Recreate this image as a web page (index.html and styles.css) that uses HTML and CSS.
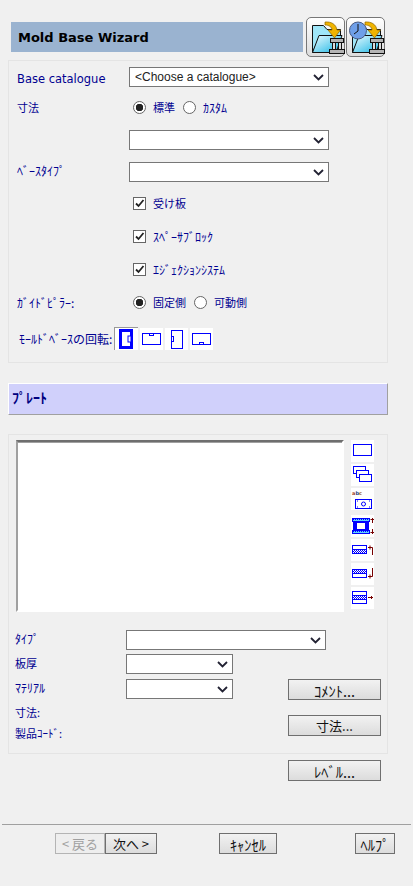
FILE: index.html
```html
<!DOCTYPE html>
<html lang="ja">
<head>
  <meta charset="UTF-8">
  <title>Mold Base Wizard</title>
  <meta name="viewport" content="width=device-width, initial-scale=1.0">
  <link rel="stylesheet" href="styles.css">
</head>
<body>
  <svg class="svg-defs" width="0" height="0">
    <defs>
      <pattern id="hatch" width="2" height="2" patternUnits="userSpaceOnUse">
        <rect width="2" height="2" fill="#fff"/>
        <rect width="1" height="1" fill="#00f"/>
        <rect x="1" y="1" width="1" height="1" fill="#00f"/>
      </pattern>
      <pattern id="hatch-cyan" width="2" height="2" patternUnits="userSpaceOnUse">
        <rect width="2" height="2" fill="#5fd0ff"/>
        <rect width="1" height="1" fill="#00f"/>
      </pattern>
      <linearGradient id="folder-grad" x1="0" y1="0" x2="1" y2="1">
        <stop offset="0" stop-color="#eefcff"/>
        <stop offset="1" stop-color="#14b4e4"/>
      </linearGradient>
      <g id="pillar">
        <rect x="23.500" y="20.500" width="13" height="4" fill="#b4b4b4" stroke="#111"/>
        <rect x="25.500" y="24.500" width="3" height="7" fill="#ddd" stroke="#111"/>
        <rect x="31.500" y="24.500" width="3" height="7" fill="#ddd" stroke="#111"/>
        <rect x="22.500" y="31.500" width="15" height="4" fill="#b4b4b4" stroke="#111"/>
      </g>
      <g id="folder">
        <path d="M5.500 34.500V7.500H16.500L20 11.500H33.500V20H12Z" fill="#9fe6f8" stroke="#111"/>
        <path d="M5.500 34.500L12 17.500H35L29 34.500Z" fill="url(#folder-grad)" stroke="#111"/>
      </g>
      <path id="arrow" d="M18 4C24 3.500 29 6 30 12H33.500L27.500 20L21 12H25C25 9 22 7 18 7Z" fill="#f0b400" stroke="#8a6500" stroke-width=".7"/>
    </defs>
  </svg>

  <header class="wizard-head">
    <div class="wizard-title">Mold Base Wizard</div>
    <button class="icon-btn">
      <svg width="38" height="38" viewBox="0 0 38 38"><use href="#folder"/><use href="#arrow"/><use href="#pillar"/></svg>
    </button>
    <button class="icon-btn">
      <svg width="38" height="38" viewBox="0 0 38 38">
        <use href="#folder"/>
        <circle cx="11" cy="12.500" r="8.500" fill="#6f9fe8" stroke="#4a5a80"/>
        <path d="M11 6V13L7 16" fill="none" stroke="#111"/>
        <use href="#arrow"/><use href="#pillar"/>
      </svg>
    </button>
  </header>

  <section class="group group-base">
    <div class="row">
      <label class="lbl lbl-latin">Base catalogue</label>
      <select class="dd dd-wide"><option>&lt;Choose a catalogue&gt;</option></select>
    </div>
    <div class="row gap-10">
      <label class="lbl zen">寸法</label>
      <span class="radio-set">
        <input type="radio" name="size" checked><span class="opt zen">標準</span>
        <input type="radio" name="size"><span class="opt">ｶｽﾀﾑ</span>
      </span>
    </div>
    <div class="row">
      <label class="lbl"></label>
      <select class="dd dd-wide"></select>
    </div>
    <div class="row gap-12">
      <label class="lbl lbl-up">ﾍﾞｰｽﾀｲﾌﾟ</label>
      <select class="dd dd-wide"></select>
    </div>
    <div class="row gap-11 row-check">
      <input type="checkbox" checked><span class="opt zen">受け板</span>
    </div>
    <div class="row row-check">
      <input type="checkbox" checked><span class="opt">ｽﾍﾟｰｻﾌﾞﾛｯｸ</span>
    </div>
    <div class="row row-check">
      <input type="checkbox" checked><span class="opt">ｴｼﾞｪｸｼｮﾝｼｽﾃﾑ</span>
    </div>
    <div class="row">
      <label class="lbl">ｶﾞｲﾄﾞﾋﾟﾗｰ:</label>
      <span class="radio-set">
        <input type="radio" name="pillar" checked><span class="opt zen">固定側</span>
        <input type="radio" name="pillar"><span class="opt zen">可動側</span>
      </span>
    </div>
    <div class="row gap-15 row-rotate">
      <label class="lbl-rotate">ﾓｰﾙﾄﾞﾍﾞｰｽの回転:</label>
      <button class="rot rot-on">
        <svg width="24" height="23" viewBox="0 0 24 23"><rect x="6.500" y="3.500" width="11" height="17" fill="none" stroke="#00f" stroke-width="3"/><rect x="14" y="9" width="3" height="6" fill="#fff" stroke="#00f"/></svg>
      </button>
      <button class="rot">
        <svg width="23" height="22" viewBox="0 0 23 22"><rect x="2.500" y="5.500" width="18" height="11" fill="none" stroke="#00f"/><rect x="9.500" y="5.500" width="4" height="2" fill="#fff" stroke="#00f"/></svg>
      </button>
      <button class="rot">
        <svg width="23" height="22" viewBox="0 0 23 22"><rect x="6.500" y="2.500" width="11" height="18" fill="none" stroke="#00f"/><rect x="6.500" y="8.500" width="2" height="5" fill="#fff" stroke="#00f"/></svg>
      </button>
      <button class="rot">
        <svg width="23" height="22" viewBox="0 0 23 22"><rect x="2.500" y="5.500" width="18" height="11" fill="none" stroke="#00f"/><rect x="9.500" y="14.500" width="4" height="2" fill="#fff" stroke="#00f"/></svg>
      </button>
    </div>
  </section>

  <h2 class="plate-bar">ﾌﾟﾚｰﾄ</h2>

  <section class="group group-plate">
    <div class="plate-top">
      <div class="plate-list"></div>
      <div class="tools">
        <button class="tool"><svg width="23" height="22" viewBox="0 0 23 22"><rect x="2.500" y="4.500" width="18" height="11" fill="none" stroke="#00f"/></svg></button>
        <button class="tool"><svg width="23" height="22" viewBox="0 0 23 22"><rect x="2.500" y="2.500" width="12" height="7" fill="#fff" stroke="#00f"/><rect x="5.500" y="6.500" width="12" height="7" fill="#fff" stroke="#00f"/><rect x="8.500" y="10.500" width="12" height="7" fill="#fff" stroke="#00f"/></svg></button>
        <button class="tool tool-last"><svg width="23" height="22" viewBox="0 0 23 22"><text x="1" y="7" class="tiny"><tspan fill="#a04020">a</tspan><tspan fill="#204080">b</tspan><tspan fill="#a06020">c</tspan></text><rect x="4.500" y="11.500" width="16" height="9" fill="none" stroke="#00f"/><circle cx="12.500" cy="16" r="2" fill="none" stroke="#00f"/><path d="M6 13h1M18 13h1M6 19h1M18 19h1" stroke="#00f"/></svg></button>
        <button class="tool"><svg width="23" height="22" viewBox="0 0 23 22"><rect x="1.500" y="3.500" width="17" height="3" fill="url(#hatch-cyan)" stroke="#00f"/><rect x="1.500" y="15.500" width="17" height="3" fill="url(#hatch-cyan)" stroke="#00f"/><rect x="3" y="7" width="14" height="8" fill="#fff" stroke="#00f" stroke-width="2"/><rect x="3" y="7" width="3" height="8" fill="#00f"/><rect x="14" y="7" width="3" height="8" fill="#00f"/><path d="M21.500 8V3M19.500 4.500h4M21.500 14v5M19.500 17.500h4" stroke="#700" fill="none"/></svg></button>
        <button class="tool"><svg width="23" height="22" viewBox="0 0 23 22"><rect x="2" y="10" width="13" height="5" fill="url(#hatch)"/><rect x="1.500" y="6.500" width="14" height="8" fill="none" stroke="#00f"/><path d="M2 10.500h13" stroke="#00f"/><path d="M17 8.500h4.500V16M19 6.500v4" stroke="#700" fill="none"/></svg></button>
        <button class="tool"><svg width="23" height="22" viewBox="0 0 23 22"><rect x="2" y="6" width="13" height="5" fill="url(#hatch)"/><rect x="1.500" y="6.500" width="14" height="8" fill="none" stroke="#00f"/><path d="M2 10.500h13" stroke="#00f"/><path d="M21.500 5v8.500H17M19 11.500v4" stroke="#700" fill="none"/></svg></button>
        <button class="tool"><svg width="23" height="22" viewBox="0 0 23 22"><rect x="2" y="8.500" width="13" height="4" fill="url(#hatch)"/><rect x="1.500" y="4.500" width="14" height="12" fill="none" stroke="#00f"/><path d="M2 8.500h13M2 12.500h13" stroke="#00f"/><path d="M17 10.500h5M20.500 9v3" stroke="#700" fill="none"/></svg></button>
      </div>
    </div>

    <div class="prow prow-first">
      <label class="plbl plbl-up2">ﾀｲﾌﾟ</label>
      <select class="dd dd-wide"></select>
    </div>
    <div class="prow">
      <label class="plbl plbl-up1 zen">板厚</label>
      <select class="dd dd-short"></select>
    </div>
    <div class="prow prow-mat">
      <label class="plbl plbl-up2">ﾏﾃﾘｱﾙ</label>
      <select class="dd dd-short"></select>
      <button class="btn btn-side btn-kana">ｺﾒﾝﾄ...</button>
    </div>
    <div class="prow-info">
      <div class="info-col">
        <div class="plbl zen">寸法:</div>
        <div class="plbl zen">製品ｺｰﾄﾞ:</div>
      </div>
      <button class="btn btn-side btn-size">寸法...</button>
    </div>
  </section>

  <div class="level-line"><button class="btn btn-side btn-kana">ﾚﾍﾞﾙ...</button></div>

  <hr class="foot-rule">
  <footer class="foot">
    <button class="btn btn-back" disabled>&lt; 戻る</button>
    <button class="btn btn-next">次へ &gt;</button>
    <button class="btn btn-cancel btn-kana">ｷｬﾝｾﾙ</button>
    <button class="btn btn-help btn-kana">ﾍﾙﾌﾟ</button>
  </footer>
</body>
</html>
```
FILE: styles.css
```css
* { box-sizing: border-box; }
html, body { margin: 0; height: 100%; overflow: hidden; }
body { background: #f0f0f0; width: 413px; color: #000090; font: 12px "Noto Sans CJK JP", "DejaVu Sans", sans-serif; }
.svg-defs { display: block; }
button, select { font-family: inherit; margin: 0; }
svg { display: block; }
.zen { font-size: 11px; }

.wizard-head { display: flex; align-items: center; height: 40px; margin: 17px 0 3px 11px; }
.wizard-title { width: 292px; height: 30px; margin-right: 3px; padding-left: 7px; background: #9ab3d0; color: #000; font: bold 13px/32px "DejaVu Sans", sans-serif; }
.icon-btn { width: 39px; height: 40px; margin-right: 1px; padding: 0; border: 1px solid #777; border-radius: 5px; background: linear-gradient(#fff, #dcdcdc); }

.group { width: 380px; margin-left: 8px; border: 1px solid #e4e4e4; }
.group-base { padding: 6px 0 12px 8px; height: 303px; }
.group-plate { height: 320px; padding: 5px 6px 0 7px; }

.row { display: flex; align-items: center; height: 20px; margin-top: 13px; }
.row:first-child { margin-top: 0; }
.gap-10 { margin-top: 10px; }
.gap-11 { margin-top: 11px; }
.gap-12 { margin-top: 12px; }
.gap-15 { margin-top: 15px; }
.lbl { width: 112px; flex: none; }
.lbl-latin { margin-top: 3px; font: 11.500px "DejaVu Sans", sans-serif; }
.lbl-up { margin-top: -4px; }
.row-check { padding-left: 116px; }
.row-rotate { height: 23px; padding-left: 2px; }
.lbl-rotate { width: 95px; flex: none; white-space: nowrap; }

.radio-set { display: flex; align-items: center; padding-left: 4px; }
.opt { margin-left: 7px; margin-right: 8px; white-space: nowrap; }

input[type=radio], input[type=checkbox] { appearance: none; flex: none; width: 13px; height: 13px; margin: 0; background: #fff; border: 1px solid #666; }
input[type=radio] { border-radius: 50%; }
input[type=radio]:checked { background: radial-gradient(circle, #222 0 3.500px, #fff 4px); }
input[type=checkbox]:checked { background: #fff url("data:image/svg+xml,%3Csvg xmlns='http://www.w3.org/2000/svg' width='11' height='11'%3E%3Cpath d='M2 5.500l2.500 2.500 5-6' fill='none' stroke='%23222' stroke-width='1.800'/%3E%3C/svg%3E") center no-repeat; }

.dd { appearance: none; flex: none; height: 20px; padding: 0 20px 0 5px; border: 1px solid #777; border-radius: 0; background: #fff url("data:image/svg+xml,%3Csvg xmlns='http://www.w3.org/2000/svg' width='11' height='7'%3E%3Cpath d='M1 1l4.500 4.500L10 1' fill='none' stroke='%23223' stroke-width='1.800'/%3E%3C/svg%3E") right 4px center no-repeat; color: #222; font-size: 12px; font-family: "Liberation Sans", sans-serif; line-height: 18px; }
.dd-wide { width: 200px; }
.dd-short { width: 107px; }

.rot { flex: none; width: 23px; height: 22px; margin-right: 2px; padding: 0; border: 0; background: #fff; }
.rot-on { width: 24px; height: 23px; border-top: 1px solid #999; border-left: 1px solid #999; }
.rot-on svg { margin: -1px 0 0 -1px; }

.plate-bar { width: 380px; height: 32px; margin: 20px 0 19px 8px; padding-left: 3px; border: 1px solid; border-color: #fff #a0a0a0 #a0a0a0 #fff; background: #d0d0fb; color: #000080; font-size: 14px; font-weight: bold; line-height: 26px; }

.plate-top { display: flex; height: 172px; }
.plate-list { width: 328px; height: 172px; margin-right: 7px; border: 2px solid; border-color: #6e6e6e #fff #fff #a0a0a0; background: #fff; box-shadow: inset 0 1px 0 #a0a0a0; }
.tools { display: flex; flex-direction: column; gap: 2px; }
.tool { flex: none; width: 23px; height: 22px; padding: 0; border: 0; background: #fff; }
.tool-last { margin-bottom: 3px; }
.tiny { font: bold 5px "DejaVu Sans", sans-serif; }

.prow { display: flex; align-items: center; height: 20px; margin-top: 4px; }
.prow-first { margin-top: 18px; }
.prow-mat { margin-top: 5px; }
.plbl { flex: none; width: 111px; margin-left: -1px; }
.plbl-up1 { margin-bottom: 2px; }
.plbl-up2 { margin-bottom: 4px; }
.btn { height: 21px; padding: 0; border: 1px solid #6f6f6f; background: linear-gradient(#f2f2f2, #dcdcdc); color: #111; font-size: 13px; white-space: nowrap; }
.btn-kana { font-size: 14.500px; }
.btn-side { flex: none; width: 93px; }
.prow-mat .btn-side { margin-left: 55px; }
.prow-info { display: flex; justify-content: space-between; margin-top: 3px; }
.info-col { display: flex; flex-direction: column; }
.info-col .plbl { height: 20px; line-height: 20px; margin-bottom: 1px; }
.btn-size { margin-top: 13px; }

.level-line { padding-left: 288px; margin-top: 6px; }
.foot-rule { width: 409px; height: 1px; margin: 43px 0 8px 2px; border: 0; background: #a0a0a0; }
.foot { display: flex; padding-left: 55px; }
.btn-back { width: 50px; border-color: #b4b4b4; background: #eee; color: #a0a0a0; }
.btn-next { width: 52px; }
.btn-cancel { width: 58px; margin-left: 62px; }
.btn-help { width: 40px; margin-left: 78px; }
```
